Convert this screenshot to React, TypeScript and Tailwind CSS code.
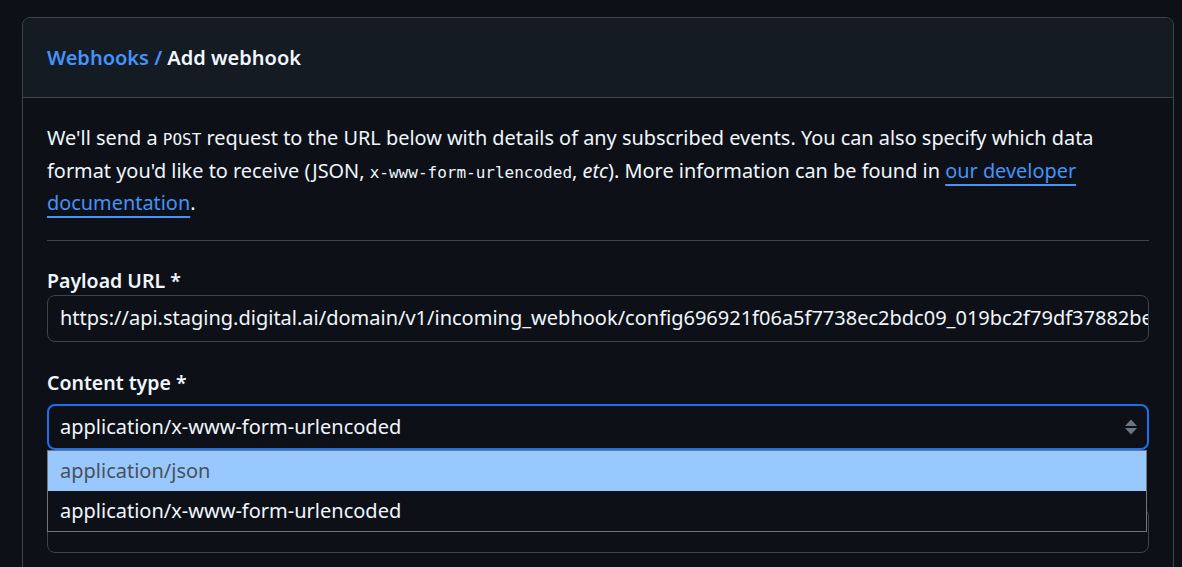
import React from "react";

function SortIcon() {
  return (
    <svg width="16" height="18" viewBox="0 0 16 18" className="text-[#6e7681]" fill="currentColor">
      <path d="M8 1.5 L14 8 H2 Z" />
      <path d="M8 16.5 L2 10 H14 Z" />
    </svg>
  );
}

export default function App() {
  const font = { fontFamily: '"Noto Sans", "Segoe UI", sans-serif' };
  return (
    <div className="h-[567px] bg-[#0d1117] pt-[17px] pl-[22px] overflow-hidden" style={font}>
      <div className="w-[1152px] rounded-t-[8px] border border-[#3d444d] bg-[#0d1117]">
        <div className="h-[80px] rounded-t-[8px] bg-[#151b23] border-b border-[#3d444d] flex items-center px-[24px]">
          <h1 className="text-[20px] font-semibold text-[#f0f6fc] leading-none">
            <a className="text-[#4493f8]">Webhooks</a>
            <span className="text-[#4493f8]"> / </span>
            Add webhook
          </h1>
        </div>
        <div className="px-[24px] pt-[24px] pb-[40px]">
          <p className="text-[19.9px] leading-[32.5px] text-[#f0f6fc]">
            We'll send a <code className="font-['DejaVu_Sans_Mono',monospace] text-[16px] leading-none">POST</code> request to the URL below with details of any subscribed events. You can also specify which data format you'd like to receive (JSON, <code className="font-['DejaVu_Sans_Mono',monospace] text-[16px] leading-none">x-www-form-urlencoded</code>, <em className="leading-none">etc</em>). More information can be found in{" "}
            <a className="text-[#4493f8] underline decoration-[#4493f8] underline-offset-[6px] decoration-2">our developer documentation</a>.
          </p>
          <div className="mt-[20px] border-t border-[#3d444d]" />
          <div className="mt-[26px] text-[19.5px] font-semibold leading-[28px] text-[#f0f6fc]">Payload URL *</div>
          <div className="h-[47px] rounded-[8px] border border-[#3d444d] bg-[#0d1117] flex items-center px-[12px] overflow-hidden">
            <span className="text-[20px] text-[#f0f6fc] whitespace-nowrap">
              https://api.staging.digital.ai/domain/v1/incoming_webhook/config696921f06a5f7738ec2bdc09_019bc2f79df37882be
            </span>
          </div>
          <div className="mt-[27px] text-[19.5px] font-semibold leading-[28px] text-[#f0f6fc]">Content type *</div>
          <div className="relative mt-[7px]">
            <div className="h-[46px] rounded-[8px] border-2 border-[#1f6feb] bg-[#0d1117] flex items-center justify-between pl-[11px] pr-[8px]">
              <span className="text-[20px] text-[#f0f6fc]">application/x-www-form-urlencoded</span>
              <SortIcon />
            </div>
            <div className="absolute left-0 top-[46px] w-[1100px] border border-[#767676] bg-[#0d1117] z-10">
              <div className="h-[40px] bg-[#99c8ff] flex items-center px-[12px] text-[20px] text-[#4a5058]">application/json</div>
              <div className="h-[40px] bg-[#0d1117] flex items-center px-[12px] text-[20px] text-[#f0f6fc]">application/x-www-form-urlencoded</div>
            </div>
            <div className="mt-[22px] text-[19.5px] font-semibold leading-[28px] text-[#f0f6fc]">Secret</div>
            <div className="mt-[8px] h-[45px] rounded-[8px] border border-[#3d444d] bg-[#0d1117]" />
          </div>
        </div>
      </div>
    </div>
  );
}
